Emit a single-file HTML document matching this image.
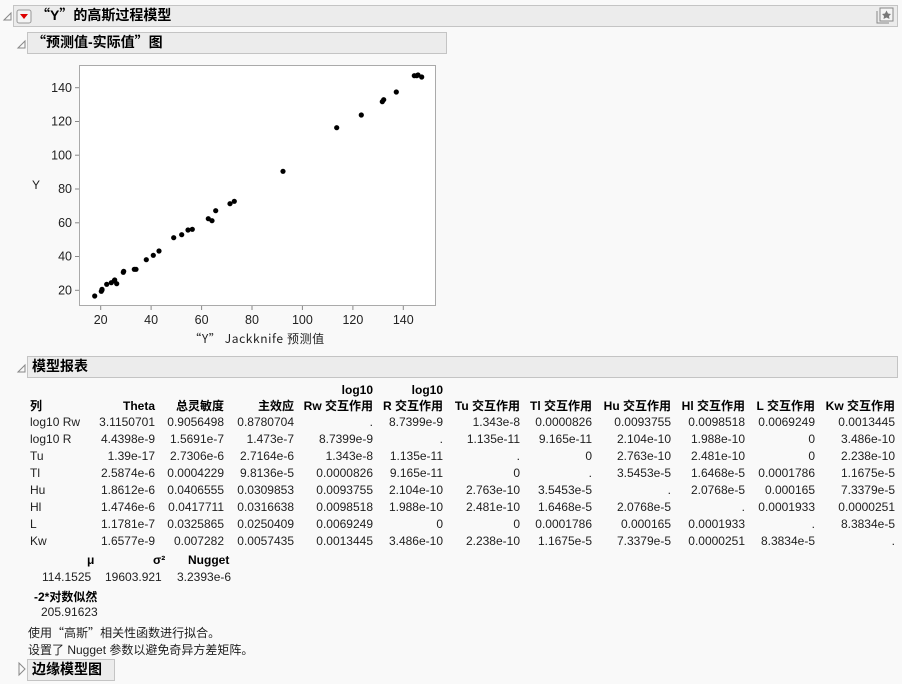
<!DOCTYPE html>
<html><head><meta charset="utf-8"><style>
body{margin:0;width:902px;height:684px;background:#f9f9f9;font-family:"Liberation Sans","Noto Sans CJK SC",sans-serif;color:#1e1e1e;position:relative;overflow:hidden;font-size:12px}
.a{position:absolute;white-space:nowrap}
.q{font-family:"Noto Sans CJK SC",sans-serif}
.bar{position:absolute;background:#ececec;border:1px solid #c4c4c4;font-weight:bold;font-size:14px;line-height:19px;padding-left:4px;box-sizing:border-box;color:#000}
.c{position:absolute;top:382px;text-align:right;white-space:nowrap;line-height:17px}
.c b{display:block;height:16px;line-height:16px;color:#000}
.l{text-align:left}
</style></head><body>
<div class="bar" style="left:13px;top:5px;width:885px;height:22px;padding-left:22px"><span class="q">“</span>Y<span class="q">”</span>的高斯过程模型</div>
<svg class="a" style="left:0;top:0" width="902" height="684">
<path d="M4 20 L11 13 L11 20 Z" fill="none" stroke="#888"/>
<rect x="17" y="10" width="14" height="13" rx="2" fill="#f4f4f4" stroke="#999"/>
<path d="M20 14 L28 14 L24 19 Z" fill="#d00"/>
<rect x="880" y="8" width="13" height="13" fill="#f4f4f4" stroke="#888"/>
<path d="M877 11 L877 23 L889 23" fill="none" stroke="#888"/>
<path d="M886.5 10.5 L888 13.5 L891 14 L889 16 L889.5 19 L886.5 17.5 L883.5 19 L884 16 L882 14 L885 13.5Z" fill="#777"/>
<path d="M18 48 L25 41 L25 48 Z" fill="none" stroke="#888"/>
<path d="M18 372 L25 365 L25 372 Z" fill="none" stroke="#888"/>
<path d="M19 663 L25 669 L19 675 Z" fill="none" stroke="#888"/>
<rect x="79.5" y="65.5" width="356" height="240" fill="#fff" stroke="#aaa"/>
<g fill="#000">
<circle cx="94.7" cy="296" r="2.6"/><circle cx="101.3" cy="291.3" r="2.6"/><circle cx="102" cy="289.3" r="2.6"/><circle cx="102" cy="290" r="2.6"/><circle cx="106.7" cy="284.3" r="2.6"/><circle cx="111.3" cy="282.7" r="2.6"/><circle cx="114.3" cy="280.7" r="2.6"/><circle cx="114.7" cy="280" r="2.6"/><circle cx="116.7" cy="283.7" r="2.6"/><circle cx="123.3" cy="272.3" r="2.6"/><circle cx="123.7" cy="271.3" r="2.6"/><circle cx="134.3" cy="269.3" r="2.6"/><circle cx="136" cy="269.3" r="2.6"/><circle cx="146.3" cy="259.7" r="2.6"/><circle cx="153.3" cy="255.3" r="2.6"/><circle cx="159" cy="251" r="2.6"/><circle cx="173.7" cy="237.7" r="2.6"/><circle cx="181.7" cy="234.7" r="2.6"/><circle cx="188" cy="230" r="2.6"/><circle cx="192.3" cy="229.3" r="2.6"/><circle cx="208.3" cy="218.7" r="2.6"/><circle cx="212" cy="220.7" r="2.6"/><circle cx="215.7" cy="210.7" r="2.6"/><circle cx="230" cy="203.7" r="2.6"/><circle cx="234.3" cy="201.3" r="2.6"/><circle cx="283" cy="171.3" r="2.6"/><circle cx="336.7" cy="127.7" r="2.6"/><circle cx="361.3" cy="115" r="2.6"/><circle cx="382.3" cy="101.7" r="2.6"/><circle cx="383.7" cy="99.7" r="2.6"/><circle cx="396.3" cy="92" r="2.6"/><circle cx="414.3" cy="75.7" r="2.6"/><circle cx="416.7" cy="75.7" r="2.6"/><circle cx="418" cy="75" r="2.6"/><circle cx="421.7" cy="77" r="2.6"/>
</g>
<g stroke="#888"><line x1="75" y1="290.3" x2="79" y2="290.3"/><line x1="75" y1="256.5" x2="79" y2="256.5"/><line x1="75" y1="222.8" x2="79" y2="222.8"/><line x1="75" y1="189" x2="79" y2="189"/><line x1="75" y1="155.2" x2="79" y2="155.2"/><line x1="75" y1="121.5" x2="79" y2="121.5"/><line x1="75" y1="87.7" x2="79" y2="87.7"/>
<line x1="100.7" y1="306" x2="100.7" y2="310"/><line x1="151.1" y1="306" x2="151.1" y2="310"/><line x1="201.6" y1="306" x2="201.6" y2="310"/><line x1="252" y1="306" x2="252" y2="310"/><line x1="302.4" y1="306" x2="302.4" y2="310"/><line x1="352.9" y1="306" x2="352.9" y2="310"/><line x1="403.3" y1="306" x2="403.3" y2="310"/></g>
<g font-size="12.5" fill="#222" text-anchor="end" font-family="Liberation Sans"><text x="72" y="294.5">20</text><text x="72" y="260.7">40</text><text x="72" y="227">60</text><text x="72" y="193.2">80</text><text x="72" y="159.4">100</text><text x="72" y="125.7">120</text><text x="72" y="92">140</text></g>
<g font-size="12.5" fill="#222" text-anchor="middle" font-family="Liberation Sans"><text x="100.7" y="324">20</text><text x="151.1" y="324">40</text><text x="201.6" y="324">60</text><text x="252" y="324">80</text><text x="302.4" y="324">100</text><text x="352.9" y="324">120</text><text x="403.3" y="324">140</text></g>
<text x="32" y="189" font-size="12" fill="#222" font-family="Liberation Sans">Y</text>
<text x="257" y="343" font-size="12" fill="#222" text-anchor="middle" font-family="Noto Sans CJK SC" letter-spacing="0.6">“Y” Jackknife 预测值</text>
</svg>
<div class="bar" style="left:27px;top:32px;width:420px;height:22px"><span class="q">“</span>预测值-实际值<span class="q">”</span>图</div>
<div class="bar" style="left:27px;top:356px;width:871px;height:22px">模型报表</div>

<div class="c l" style="left:30px"><b></b><b>列</b>log10 Rw<br>log10 R<br>Tu<br>Tl<br>Hu<br>Hl<br>L<br>Kw</div>
<div class="c" style="right:747px"><b></b><b>Theta</b>3.1150701<br>4.4398e-9<br>1.39e-17<br>2.5874e-6<br>1.8612e-6<br>1.4746e-6<br>1.1781e-7<br>1.6577e-9</div>
<div class="c" style="right:678px"><b></b><b>总灵敏度</b>0.9056498<br>1.5691e-7<br>2.7306e-6<br>0.0004229<br>0.0406555<br>0.0417711<br>0.0325865<br>0.007282</div>
<div class="c" style="right:608px"><b></b><b>主效应</b>0.8780704<br>1.473e-7<br>2.7164e-6<br>9.8136e-5<br>0.0309853<br>0.0316638<br>0.0250409<br>0.0057435</div>
<div class="c" style="right:529px"><b>log10</b><b>Rw 交互作用</b>.<br>8.7399e-9<br>1.343e-8<br>0.0000826<br>0.0093755<br>0.0098518<br>0.0069249<br>0.0013445</div>
<div class="c" style="right:459px"><b>log10</b><b>R 交互作用</b>8.7399e-9<br>.<br>1.135e-11<br>9.165e-11<br>2.104e-10<br>1.988e-10<br>0<br>3.486e-10</div>
<div class="c" style="right:382px"><b></b><b>Tu 交互作用</b>1.343e-8<br>1.135e-11<br>.<br>0<br>2.763e-10<br>2.481e-10<br>0<br>2.238e-10</div>
<div class="c" style="right:310px"><b></b><b>Tl 交互作用</b>0.0000826<br>9.165e-11<br>0<br>.<br>3.5453e-5<br>1.6468e-5<br>0.0001786<br>1.1675e-5</div>
<div class="c" style="right:231px"><b></b><b>Hu 交互作用</b>0.0093755<br>2.104e-10<br>2.763e-10<br>3.5453e-5<br>.<br>2.0768e-5<br>0.000165<br>7.3379e-5</div>
<div class="c" style="right:157px"><b></b><b>Hl 交互作用</b>0.0098518<br>1.988e-10<br>2.481e-10<br>1.6468e-5<br>2.0768e-5<br>.<br>0.0001933<br>0.0000251</div>
<div class="c" style="right:87px"><b></b><b>L 交互作用</b>0.0069249<br>0<br>0<br>0.0001786<br>0.000165<br>0.0001933<br>.<br>8.3834e-5</div>
<div class="c" style="right:7px"><b></b><b>Kw 交互作用</b>0.0013445<br>3.486e-10<br>2.238e-10<br>1.1675e-5<br>7.3379e-5<br>0.0000251<br>8.3834e-5<br>.</div>

<div class="a" style="left:87px;top:553px;font-weight:bold;color:#000">μ</div>
<div class="a" style="left:153px;top:553px;font-weight:bold;color:#000">σ²</div>
<div class="a" style="left:188px;top:553px;font-weight:bold;color:#000">Nugget</div>
<div class="a" style="left:42px;top:570px">114.1525</div>
<div class="a" style="left:105px;top:570px">19603.921</div>
<div class="a" style="left:177px;top:570px">3.2393e-6</div>
<div class="a" style="left:34px;top:588px;font-weight:bold;color:#000">-2*对数似然</div>
<div class="a" style="left:41px;top:605px">205.91623</div>
<div class="a" style="left:28px;top:624px">使用<span class="q">“</span>高斯<span class="q">”</span>相关性函数进行拟合。</div>
<div class="a" style="left:28px;top:641px">设置了 Nugget 参数以避免奇异方差矩阵。</div>
<div class="bar" style="left:27px;top:659px;width:88px;height:22px">边缘模型图</div>
</body></html>
